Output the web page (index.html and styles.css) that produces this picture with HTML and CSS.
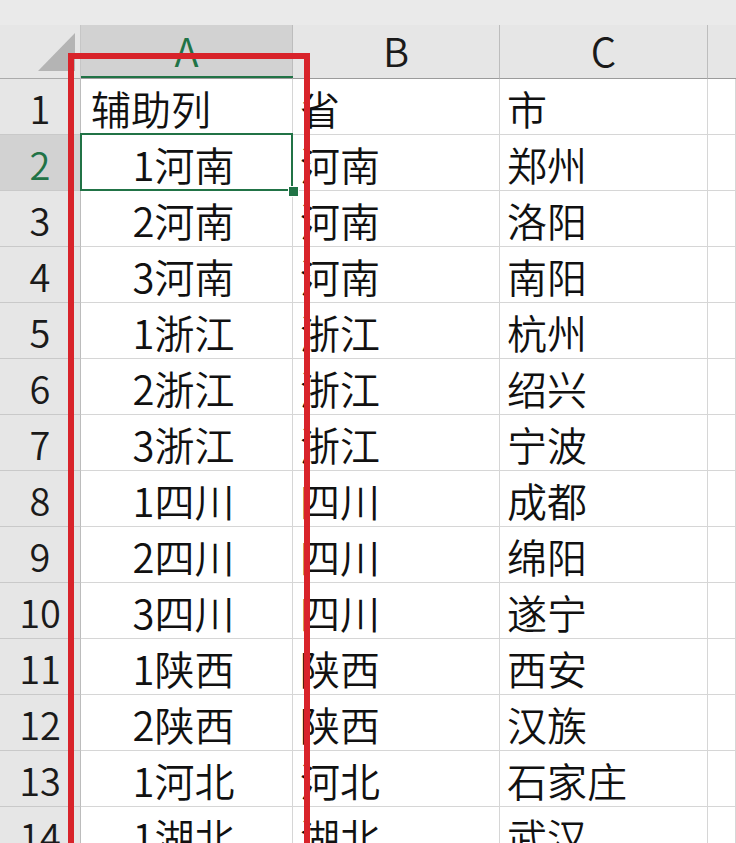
FILE: index.html
```html
<!DOCTYPE html>
<html lang="zh-CN">
<head>
<meta charset="utf-8">
<title>Sheet</title>
<link rel="stylesheet" href="styles.css">
</head>
<body>
<div class="screen">
  <div class="topstrip"></div>
  <div class="sheet">
    <div class="hcell corner">
      <svg class="tri" width="38" height="39" viewBox="0 0 38 39"><polygon points="0,38 37,38 37,0" fill="#b4b4b4"/></svg>
    </div>
    <div class="hcell colh sel">A</div>
    <div class="hcell colh">B</div>
    <div class="hcell colh">C</div>
    <div class="hcell colh last"></div>

    <div class="rh">1</div><div class="c left first">辅助列</div><div class="c left">省</div><div class="c left">市</div><div class="c"></div>
    <div class="rh selr">2</div><div class="c ctr">1河南</div><div class="c left">河南</div><div class="c left">郑州</div><div class="c"></div>
    <div class="rh">3</div><div class="c ctr">2河南</div><div class="c left">河南</div><div class="c left">洛阳</div><div class="c"></div>
    <div class="rh">4</div><div class="c ctr">3河南</div><div class="c left">河南</div><div class="c left">南阳</div><div class="c"></div>
    <div class="rh">5</div><div class="c ctr">1浙江</div><div class="c left">浙江</div><div class="c left">杭州</div><div class="c"></div>
    <div class="rh">6</div><div class="c ctr">2浙江</div><div class="c left">浙江</div><div class="c left">绍兴</div><div class="c"></div>
    <div class="rh">7</div><div class="c ctr">3浙江</div><div class="c left">浙江</div><div class="c left">宁波</div><div class="c"></div>
    <div class="rh">8</div><div class="c ctr">1四川</div><div class="c left">四川</div><div class="c left">成都</div><div class="c"></div>
    <div class="rh">9</div><div class="c ctr">2四川</div><div class="c left">四川</div><div class="c left">绵阳</div><div class="c"></div>
    <div class="rh">10</div><div class="c ctr">3四川</div><div class="c left">四川</div><div class="c left">遂宁</div><div class="c"></div>
    <div class="rh">11</div><div class="c ctr">1陕西</div><div class="c left">陕西</div><div class="c left">西安</div><div class="c"></div>
    <div class="rh">12</div><div class="c ctr">2陕西</div><div class="c left">陕西</div><div class="c left">汉族</div><div class="c"></div>
    <div class="rh">13</div><div class="c ctr">1河北</div><div class="c left">河北</div><div class="c left">石家庄</div><div class="c"></div>
    <div class="rh">14</div><div class="c ctr">1湖北</div><div class="c left">湖北</div><div class="c left">武汉</div><div class="c"></div>
  </div>
  <div class="colsel-line"></div>
  <div class="selection"><span class="handle"></span></div>
  <div class="redbox"></div>
</div>
</body>
</html>
```

FILE: styles.css
```css
html, body {
  margin: 0;
  padding: 0;
  background: #ffffff;
}
.screen {
  position: relative;
  width: 736px;
  height: 843px;
  overflow: hidden;
  font-family: "Noto Sans CJK SC", "Noto Sans", sans-serif;
  font-weight: 350;
  color: #111;
}
.topstrip {
  height: 25px;
  background: #eaeaea;
}
.sheet {
  display: grid;
  grid-template-columns: 81px 212px 207px 208px 28px;
  grid-template-rows: 54px repeat(14, 56px);
}
.hcell {
  box-sizing: border-box;
  background: #e6e6e6;
  border-bottom: 1px solid #9b9b9b;
  display: flex;
  align-items: center;
  justify-content: center;
  font-size: 40px;
  line-height: 1.2;
  color: #1a1a1a;
}
.corner {
  position: relative;
  border-right: 1px solid #c6c6c6;
  border-bottom-color: #ababab;
}
.tri {
  position: absolute;
  left: 38px;
  top: 8px;
}
.colh {
  border-right: 1px solid #bdbdbd;
  padding-bottom: 4px;
}
.colh.sel {
  background: #d2d2d2;
  color: #217346;
}
.colh.last {
  border-right: none;
}
.rh {
  box-sizing: border-box;
  background: #e6e6e6;
  border-right: 1px solid #bcbcbc;
  border-bottom: 1px solid #c9c9c9;
  display: flex;
  align-items: center;
  justify-content: center;
  font-size: 38px;
  line-height: 1.2;
  color: #1a1a1a;
  padding-top: 2px;
}
.rh.selr {
  background: #d2d2d2;
  color: #217346;
}
.c {
  box-sizing: border-box;
  border-right: 1px solid #d6d6d6;
  border-bottom: 1px solid #d6d6d6;
  display: flex;
  align-items: center;
  font-size: 40px;
  line-height: 1.2;
  padding-top: 3px;
  white-space: nowrap;
}
.c.left {
  justify-content: flex-start;
  padding-left: 7px;
}
.c.left.first {
  padding-left: 10px;
}
.c.ctr {
  justify-content: center;
  padding-right: 6px;
}
.colsel-line {
  position: absolute;
  left: 81px;
  top: 76px;
  width: 212px;
  height: 2px;
  background: #217346;
}
.selection {
  position: absolute;
  left: 80px;
  top: 133px;
  width: 213px;
  height: 58px;
  box-sizing: border-box;
  border: 2px solid #217346;
}
.handle {
  position: absolute;
  right: -8px;
  bottom: -8px;
  width: 9px;
  height: 9px;
  background: #217346;
  border: 1px solid #ffffff;
}
.redbox {
  position: absolute;
  left: 68px;
  top: 53px;
  width: 242px;
  height: 900px;
  box-sizing: border-box;
  border: 6px solid #d8232a;
}
```
